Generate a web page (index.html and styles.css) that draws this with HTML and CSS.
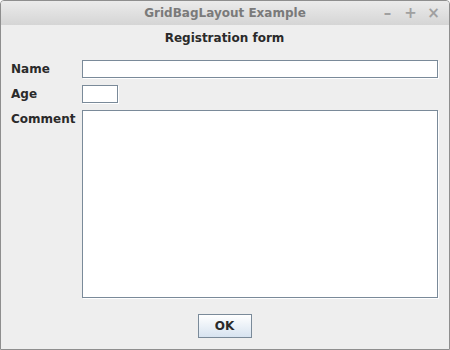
FILE: index.html
```html
<!DOCTYPE html>
<html lang="en">
<head>
  <meta charset="UTF-8" />
  <title>GridBagLayout Example</title>
  <link rel="stylesheet" href="styles.css">
</head>
<body>
  <div class="window">
    <div class="titlebar">
      <span class="title">GridBagLayout Example</span>
      <div class="controls">
        <span class="ctl">&#8211;</span>
        <span class="ctl">+</span>
        <span class="ctl close">&#215;</span>
      </div>
    </div>

    <div class="content">
      <h1>Registration form</h1>

      <div class="form-grid">
        <label for="name">Name</label>
        <input id="name" class="field" type="text">

        <label for="age">Age</label>
        <input id="age" class="field age" type="text">

        <label for="comment" class="top">Comment</label>
        <textarea id="comment" class="field area"></textarea>
      </div>

      <div class="actions">
        <button class="btn">OK</button>
      </div>
    </div>
  </div>
</body>
</html>
```

FILE: styles.css
```css
:root {
  --frame: #8e8e8e;
  --bg: #eeeeee;
  --border: #7a8a99;
  --text: #2a2a2a;
}
* { box-sizing: border-box; }
body {
  margin: 0;
  font-family: 'DejaVu Sans', sans-serif;
  background: #ffffff;
}
.window {
  width: 450px;
  height: 350px;
  border: 1px solid var(--frame);
  border-radius: 4px 4px 0 0;
  background: var(--bg);
  display: flex;
  flex-direction: column;
  overflow: hidden;
}
.titlebar {
  height: 24px;
  flex: none;
  position: relative;
  background: linear-gradient(#ebebeb, #d5d5d5);
  display: flex;
  align-items: center;
  justify-content: center;
}
.title {
  font-size: 12px;
  font-weight: bold;
  color: #7a7a7a;
}
.controls {
  position: absolute;
  right: 9px;
  top: 0;
  height: 24px;
  display: flex;
  align-items: center;
  gap: 10px;
}
.ctl {
  width: 13px;
  text-align: center;
  font-size: 15px;
  font-weight: bold;
  color: #a0a0a0;
}
.content {
  padding: 5px 11px 0 10px;
  color: var(--text);
}
h1 {
  margin: 0;
  font-size: 12px;
  line-height: 16px;
  text-align: center;
  color: #2a2a2a;
}
.form-grid {
  margin-top: 14px;
  display: grid;
  grid-template-columns: 71px 1fr;
  grid-template-rows: 18px 18px 188px;
  row-gap: 7px;
}
.form-grid label {
  font-size: 12px;
  font-weight: bold;
  line-height: 18px;
}
.form-grid label.top {
  align-self: start;
}
.field {
  margin: 0;
  padding: 0 3px;
  height: 18px;
  border: 1px solid var(--border);
  border-radius: 0;
  background: #ffffff;
  box-shadow: 1px 1px 0 #ffffff;
  font-family: 'DejaVu Sans', sans-serif;
  font-size: 12px;
  outline: none;
}
.field.age {
  width: 36px;
}
.field.area {
  height: 188px;
  resize: none;
}
.actions {
  margin-top: 16px;
  display: flex;
  justify-content: center;
}
.btn {
  width: 54px;
  height: 24px;
  border: 1px solid var(--border);
  border-radius: 0;
  background: linear-gradient(#ffffff, #d7e3f0);
  font-family: 'DejaVu Sans', sans-serif;
  font-size: 12px;
  font-weight: bold;
  color: var(--text);
  padding: 0;
}
```
